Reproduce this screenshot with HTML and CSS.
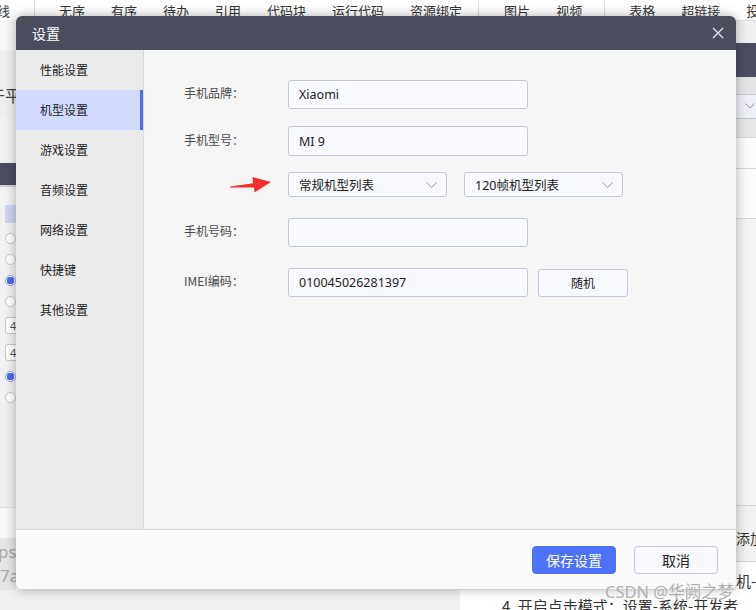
FILE: index.html
```html
<!DOCTYPE html>
<html lang="zh-CN">
<head>
<meta charset="utf-8">
<title>设置</title>
<link rel="stylesheet" href="styles.css">
</head>
<body>
<div class="page">
  <div class="toolbar">
    <span class="tb-first">线</span>
    <span class="tb-sep sep1"></span>
    <span class="tb-item">无序</span>
    <span class="tb-item">有序</span>
    <span class="tb-item">待办</span>
    <span class="tb-item">引用</span>
    <span class="tb-item">代码块</span>
    <span class="tb-item">运行代码</span>
    <span class="tb-item">资源绑定</span>
    <span class="tb-sep sep2"></span>
    <span class="tb-item">图片</span>
    <span class="tb-item">视频</span>
    <span class="tb-sep sep3"></span>
    <span class="tb-item">表格</span>
    <span class="tb-item">超链接</span>
    <span class="tb-item">投</span>
  </div>
  <div class="page-main">
    <div class="left-col">
      <div class="lc-blank"></div>
      <div class="lc-title"><span>于平</span></div>
      <div class="lc-gap"></div>
      <div class="lc-dark"></div>
      <div class="lc-light"></div>
      <div class="lc-blue"></div>
      <div class="lc-opts">
        <span class="radio"></span>
        <span class="radio"></span>
        <span class="radio on"></span>
        <span class="radio"></span>
        <span class="mini-input">4</span>
        <span class="mini-input">4</span>
        <span class="radio on"></span>
        <span class="radio"></span>
      </div>
      <div class="lc-fill"></div>
      <div class="lc-white"></div>
      <div class="lc-code"><span>ps</span><span>7a</span></div>
    </div>
    <div class="right-col">
      <div class="rc-light"></div>
      <div class="rc-dark"></div>
      <div class="rc-grey"></div>
      <div class="rc-select"><svg width="10" height="6" viewBox="0 0 10 6"><polyline points="0.5,0.5 5,5 9.5,0.5" fill="none" stroke="#999" stroke-width="1"/></svg></div>
      <div class="rc-grey2"></div>
      <div class="rc-row r1"></div>
      <div class="rc-row r2"></div>
      <div class="rc-fill"></div>
      <div class="rc-add">添加</div>
      <div class="rc-text">机-</div>
    </div>
  </div>
  <div class="page-bottom">
    <div class="pb-left"></div>
    <div class="pb-right">4. 开启点击模式：设置-系统-开发者</div>
  </div>
</div>

<div class="dialog">
  <div class="dlg-header">
    <span class="dlg-title">设置</span>
    <svg class="dlg-close" width="12" height="12" viewBox="0 0 12 12"><path d="M1 1 L11 11 M11 1 L1 11" stroke="#e6e7ec" stroke-width="1.3" fill="none"/></svg>
  </div>
  <div class="dlg-body">
    <ul class="side">
      <li class="side-item">性能设置</li>
      <li class="side-item active">机型设置</li>
      <li class="side-item">游戏设置</li>
      <li class="side-item">音频设置</li>
      <li class="side-item">网络设置</li>
      <li class="side-item">快捷键</li>
      <li class="side-item">其他设置</li>
    </ul>
    <div class="content">
      <div class="row row-a">
        <label class="lbl">手机品牌：</label>
        <div class="field">Xiaomi</div>
      </div>
      <div class="row row-b">
        <label class="lbl">手机型号：</label>
        <div class="field">MI 9</div>
      </div>
      <div class="row row-c">
        <div class="lbl arrow-cell">
          <svg width="41" height="17" viewBox="0 0 41 17"><polygon points="0,10.5 23,7.2 22.5,1 41,6 24.5,16.5 24,11.5 0,11.4" fill="#f0302c"/></svg>
        </div>
        <div class="select">常规机型列表<svg width="11" height="6" viewBox="0 0 11 6"><polyline points="0.5,0.5 5.5,5.3 10.5,0.5" fill="none" stroke="#9a9ca8" stroke-width="1"/></svg></div>
        <div class="select">120帧机型列表<svg width="11" height="6" viewBox="0 0 11 6"><polyline points="0.5,0.5 5.5,5.3 10.5,0.5" fill="none" stroke="#9a9ca8" stroke-width="1"/></svg></div>
      </div>
      <div class="row row-d">
        <label class="lbl">手机号码：</label>
        <div class="field"></div>
      </div>
      <div class="row row-e">
        <label class="lbl">IMEI编码：</label>
        <div class="field">010045026281397</div>
        <button class="btn-random">随机</button>
      </div>
    </div>
  </div>
  <div class="dlg-footer">
    <button class="btn btn-primary">保存设置</button>
    <button class="btn btn-default">取消</button>
  </div>
</div>

<div class="watermark">CSDN @华阙之梦</div>
</body>
</html>
```

FILE: styles.css
```css
* { box-sizing: border-box; }
html, body { margin: 0; padding: 0; }
body {
  width: 756px;
  height: 610px;
  overflow: hidden;
  position: relative;
  background: #f4f4f4;
  font-family: "Noto Sans", "Noto Sans CJK SC", sans-serif;
  color: #333;
}

/* ---------- background page ---------- */
.page { width: 756px; height: 610px; display: flex; flex-direction: column; }
.toolbar {
  height: 20px;
  display: flex;
  align-items: center;
  background: #fff;
  font-family: "Noto Sans CJK SC", sans-serif;
  font-size: 13px;
  color: #333;
  white-space: nowrap;
  overflow: hidden;
  flex: none;
}
.tb-first { width: 34px; margin-left: -3px; padding-left: 0; flex: none; }
.tb-item { padding: 0 13px; flex: none; }
.tb-sep { width: 1px; height: 20px; background: #dcdcdc; flex: none; }
.sep1 { margin-right: 11px; margin-left: 3px; }
.sep2 { margin-left: 3px; margin-right: 12px; }
.sep3 { margin-left: 9px; margin-right: 11px; }

.page-main { flex: 1; display: flex; justify-content: space-between; }
.left-col { width: 16px; display: flex; flex-direction: column; background: #f2f2f2; overflow: hidden; }
.lc-blank { height: 30px; background: #f7f7f7; }
.lc-title { height: 65px; background: #efefef; padding-top: 36px; font-family: "Noto Sans CJK SC", sans-serif; font-size: 16px; line-height: 18px; color: #444; white-space: nowrap; }
.lc-title span { margin-left: -11px; }
.lc-gap { height: 48px; background: #f1f1f1; }
.lc-dark { height: 22px; background: #4b4e5e; }
.lc-light { height: 20px; background: #f3f3f3; border-top: 2px solid #cfd0d6; }
.lc-blue { height: 18px; margin-left: 5px; background: #cfd5f2; }
.lc-opts { display: flex; flex-direction: column; padding: 10px 0 0 5px; gap: 10px; }
.radio { width: 11px; height: 11px; border-radius: 50%; border: 1px solid #c8c8c8; background: #fff; flex: none; }
.radio.on { border-color: #8fa2f4; background: radial-gradient(circle, #4d6bf0 0 3.5px, #fff 4px); }
.mini-input { height: 17px; width: 14px; border: 1px solid #c9c9c9; border-radius: 3px; background: #fff; font-size: 11px; line-height: 15px; padding-left: 4px; color: #555; flex: none; }
.lc-fill { flex: 1; background: #f0f0f0; border-bottom: 1px solid #dedede; }
.lc-white { height: 30px; background: #f7f7f7; }
.lc-code { height: 52px; background: #e6e6e6; display: flex; flex-direction: column; font-size: 17px; line-height: 24px; color: #aaa; padding-top: 2px; white-space: nowrap; margin-bottom: 0; }
.lc-code span:first-child { margin-left: -2px; }

.right-col { width: 20px; display: flex; flex-direction: column; background: #f3f3f3; overflow: hidden; }
.rc-light { height: 23px; background: #f0f0f0; border-top: 1px solid #e2e2e2; }
.rc-dark { height: 34px; background: #4b4e5e; }
.rc-grey { height: 17px; background: #e4e4e4; }
.rc-select { height: 25px; background: #eef0f7; border-top: 1px solid #c6c8d6; border-bottom: 1px solid #c6c8d6; padding: 8px 0 0 9px; line-height: 0; }
.rc-grey2 { height: 18px; background: #e7e7e7; }
.rc-row { background: #fbfbfb; border-top: 1px solid #d6d6d6; }
.r1 { height: 31px; }
.r2 { height: 50px; }
.rc-fill { flex: 1; background: #f3f3f3; border-top: 1px solid #d6d6d6; border-bottom: 1px solid #d6d6d6; }
.rc-add { height: 56px; background: #f1f1f1; font-family: "Noto Sans CJK SC", sans-serif; font-size: 14px; line-height: 16px; padding-top: 24px; color: #333; white-space: nowrap; border-bottom: 1px solid #d6d6d6; }
.rc-text { height: 28px; background: #fff; font-family: "Noto Sans CJK SC", sans-serif; font-size: 15px; line-height: 18px; padding-top: 10px; color: #333; white-space: nowrap; }

.page-bottom { height: 20px; display: flex; flex: none; }
.pb-left { width: 460px; background: #f0f0f0; }
.pb-right { flex: 1; background: #fff; padding: 7px 0 0 42px; font-family: "Noto Sans CJK SC", sans-serif; font-size: 15px; line-height: 18px; color: #333; white-space: nowrap; overflow: hidden; }

/* ---------- dialog (overlay) ---------- */
.dialog {
  position: absolute;
  left: 16px;
  top: 16px;
  width: 720px;
  height: 573px;
  border-radius: 6px;
  overflow: hidden;
  box-shadow: 0 0 12px rgba(0, 0, 0, 0.32);
  display: flex;
  flex-direction: column;
  background: #f5f5f5;
  font-family: "Noto Sans CJK SC", sans-serif;
}
.dlg-header {
  height: 34px;
  flex: none;
  background: #4a4d5c;
  display: flex;
  align-items: center;
  justify-content: space-between;
  padding: 0 12px 0 16px;
}
.dlg-title { color: #fff; font-size: 14px; line-height: 16px; }
.dlg-close { display: block; margin-top: 0; }

.dlg-body { flex: 1; display: flex; min-height: 0; }
.side {
  list-style: none;
  margin: 0;
  padding: 0;
  width: 128px;
  flex: none;
  background: #ebebeb;
  border-right: 1px solid #d9d9d9;
}
.side-item {
  height: 40px;
  line-height: 40px;
  padding-left: 24px;
  font-size: 12px;
  color: #222;
}
.side-item.active { background: #d1dbff; box-shadow: inset -3px 0 0 #4d6cf4; }

.content { flex: 1; padding: 30px 0 0 40px; background: #f5f5f5; }
.row { display: flex; align-items: center; }
.row-a { height: 29px; margin-bottom: 17px; }
.row-b { height: 30px; margin-bottom: 16px; }
.row-c { height: 25px; margin-bottom: 21px; }
.row-d { height: 29px; margin-bottom: 21px; }
.row-e { height: 29px; }
.lbl { width: 104px; flex: none; font-size: 12px; line-height: 14px; color: #4a4a4a; margin-top: -3px; }
.arrow-cell { margin-top: 0; padding-left: 46px; line-height: 0; }
.arrow-cell svg { display: block; margin-top: -1px; }
.field {
  width: 240px;
  height: 100%;
  border: 1px solid #c5c7d8;
  border-radius: 3px;
  background: #f8f9fd;
  padding-left: 10px;
  display: flex;
  align-items: center;
  font-family: "Noto Sans", "Noto Sans CJK SC", sans-serif;
  font-size: 12.5px;
  color: #222;
}
.select {
  width: 159px;
  height: 25px;
  margin-right: 17px;
  border: 1px solid #c5c7d8;
  border-radius: 3px;
  background: #f8f9fd;
  padding: 0 9px 0 10px;
  display: flex;
  align-items: center;
  justify-content: space-between;
  font-family: "Noto Sans", "Noto Sans CJK SC", sans-serif;
  font-size: 12.5px;
  color: #222;
}
.select svg { display: block; }
.btn-random {
  margin-left: 10px;
  width: 90px;
  height: 28px;
  border: 1px solid #c5c7d8;
  border-radius: 3px;
  background: #f8f9fd;
  font-family: "Noto Sans CJK SC", sans-serif;
  font-size: 12px;
  color: #222;
  padding: 0;
}

.dlg-footer {
  height: 60px;
  flex: none;
  background: #fafafa;
  border-top: 1px solid #dcdcdc;
  display: flex;
  align-items: center;
  justify-content: flex-end;
  padding-right: 18px;
  gap: 18px;
}
.btn {
  width: 84px;
  height: 28px;
  border-radius: 4px;
  font-family: "Noto Sans CJK SC", sans-serif;
  font-size: 14px;
  padding: 0;
}
.btn-primary { background: #4f71f8; border: 1px solid #4f71f8; color: #fff; }
.btn-default { background: #f8f9fd; border: 1px solid #c5c7d8; color: #222; }

.watermark {
  position: absolute;
  left: 605px;
  top: 582px;
  font-family: "Noto Sans", "Noto Sans CJK SC", sans-serif;
  font-size: 16.5px;
  line-height: 20px;
  color: rgba(140, 140, 140, 0.7);
  white-space: nowrap;
  text-shadow: 0 0 1px rgba(255,255,255,0.8);
}
```
